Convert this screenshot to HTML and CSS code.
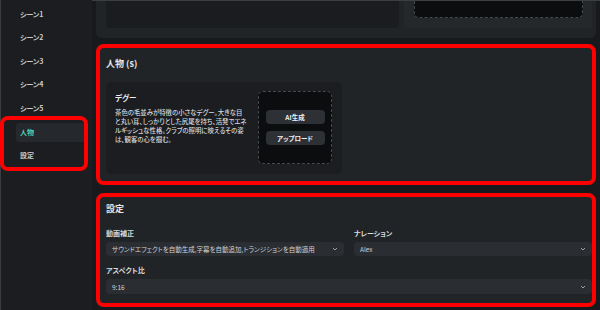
FILE: index.html
```html
<!DOCTYPE html>
<html lang="ja">
<head>
  <meta charset="UTF-8" />
  <title>Editor</title>
  <link rel="stylesheet" href="styles.css">
</head>
<body>
  <div class="app">
    <aside class="sidebar">
      <div class="nav-item">シーン1</div>
      <div class="nav-item">シーン2</div>
      <div class="nav-item">シーン3</div>
      <div class="nav-item">シーン4</div>
      <div class="nav-item">シーン5</div>
      <div class="nav-group marked">
        <div class="nav-item active">人物</div>
        <div class="nav-item">設定</div>
      </div>
    </aside>

    <main class="main">
      <section class="panel panel-prev">
        <div class="prev-card"></div>
        <div class="prev-card prev-media">
          <div class="dropzone"></div>
        </div>
      </section>

      <section class="panel panel-characters marked">
        <h2 class="panel-title">人物 (s)</h2>
        <div class="character-card">
          <div class="character-info">
            <h3>デグー</h3>
            <p>茶色の毛並みが特徴の小さなデグー。大きな目<br>と丸い耳、しっかりとした尻尾を持ち、活発でエネ<br>ルギッシュな性格。クラブの照明に映えるその姿<br>は、観客の心を掴む。</p>
          </div>
          <div class="dropzone">
            <button class="btn">AI生成</button>
            <button class="btn">アップロード</button>
          </div>
        </div>
      </section>

      <section class="panel panel-settings marked">
        <h2 class="panel-title">設定</h2>
        <div class="settings-grid">
          <div class="field">
            <label>動画補正</label>
            <div class="select">
              <span>サウンドエフェクトを自動生成,字幕を自動追加,トランジションを自動適用</span>
              <svg class="chevron" viewBox="0 0 6 4"><path d="M1 1l2 2 2-2" /></svg>
            </div>
          </div>
          <div class="field">
            <label>ナレーション</label>
            <div class="select">
              <span>Alex</span>
              <svg class="chevron" viewBox="0 0 6 4"><path d="M1 1l2 2 2-2" /></svg>
            </div>
          </div>
          <div class="field field-wide">
            <label>アスペクト比</label>
            <div class="select select-tall">
              <span>9:16</span>
              <svg class="chevron" viewBox="0 0 6 4"><path d="M1 1l2 2 2-2" /></svg>
            </div>
          </div>
        </div>
      </section>
    </main>
  </div>
</body>
</html>
```

FILE: styles.css
```css
* {
  margin: 0;
  padding: 0;
  box-sizing: border-box;
  font-family: "Noto Sans CJK JP", "Noto Sans", sans-serif;
  font-feature-settings: "palt";
}
body {
  width: 600px;
  height: 310px;
  overflow: hidden;
  background: #17191c;
  color: #d4d6d9;
}
.app {
  display: flex;
  height: 310px;
}
.sidebar {
  width: 92px;
  flex-shrink: 0;
  background: #1b1d20;
  border-left: 1px solid #3a3d41;
  padding: 4.5px 4px 0 15px;
  display: flex;
  flex-direction: column;
  gap: 4.67px;
}
.nav-item {
  height: 19px;
  line-height: 19px;
  padding-left: 4px;
  font-size: 7px;
  font-weight: 700;
  color: #c9cbcf;
  border-radius: 3px;
}
.nav-item.active {
  background: #25282c;
  color: #4fd0b2;
}
.nav-group {
  margin-left: -16px;
  padding-left: 16px;
  display: flex;
  flex-direction: column;
  gap: 4.67px;
}
.nav-group.marked::after {
  top: -7px;
  bottom: -6px;
}
.marked {
  position: relative;
}
.marked::after {
  content: "";
  position: absolute;
  top: 0;
  right: 0;
  bottom: 0;
  left: 0;
  border: 4px solid #ff0000;
  border-radius: 8px;
  pointer-events: none;
}
.main {
  flex: 1;
  padding: 0 4px;
  border-top: 1px solid #3b3e42;
  overflow: hidden;
  display: flex;
  flex-direction: column;
}
.panel {
  background: #212427;
  border-radius: 6px;
}
.panel-prev {
  margin-top: -20px;
  height: 57px;
  padding: 0 4px 10px 10px;
  display: flex;
  gap: 5px;
  flex-shrink: 0;
}
.prev-card {
  width: 293px;
  background: #1a1c1f;
  border-radius: 0 0 4px 4px;
}
.prev-media {
  flex: 1;
  background: #25282b;
  padding: 0 9px 10px 10px;
  display: flex;
}
.prev-media .dropzone {
  flex: 1;
  height: auto;
}
.panel-title {
  font-size: 9px;
  line-height: 12px;
  font-weight: 700;
  color: #e4e6e8;
}
.panel-characters {
  margin-top: 6px;
  padding: 14px 4px 11px 10px;
}
.panel-characters .panel-title {
  margin-bottom: 12px;
}
.character-card {
  width: 236px;
  height: 92px;
  background: #1b1d20;
  border-radius: 5px;
  padding: 9px 10px 10px 9px;
  display: flex;
}
.character-info {
  flex: 1;
}
.character-info h3 {
  font-size: 7.5px;
  line-height: 13px;
  font-weight: 700;
  color: #eceef0;
}
.character-info p {
  margin-top: 4px;
  font-size: 6.4px;
  line-height: 9px;
  font-weight: 500;
  white-space: nowrap;
  color: #d6d8db;
}
.dropzone {
  width: 74px;
  height: 73px;
  background: #0c0d0f;
  border: 1px dashed #45484d;
  border-radius: 5px;
  display: flex;
  flex-direction: column;
  align-items: center;
  justify-content: center;
  gap: 7px;
}
.btn {
  width: 59px;
  height: 14px;
  border: none;
  border-radius: 4px;
  background: #2d3034;
  color: #eef0f2;
  font-size: 6.5px;
  font-weight: 700;
}
.panel-settings {
  margin-top: 8px;
  padding: 10px 4px 13px 10px;
}
.panel-settings .panel-title {
  margin-bottom: 13px;
}
.settings-grid {
  display: grid;
  grid-template-columns: 1fr 1fr;
  column-gap: 10px;
  row-gap: 9px;
}
.field-wide {
  grid-column: 1 / 3;
}
.field label {
  display: block;
  font-size: 7px;
  line-height: 10px;
  font-weight: 700;
  color: #d8dadd;
  margin-bottom: 4px;
}
.select {
  height: 14px;
  background: #2a2d31;
  border-radius: 4px;
  padding: 0 6px;
  display: flex;
  align-items: center;
  justify-content: space-between;
  font-size: 6.5px;
  color: #d0d2d5;
}
.select-tall {
  height: 15px;
}
.chevron {
  width: 6px;
  height: 4px;
  fill: none;
  stroke: #a9acb0;
  stroke-width: 0.9;
}
```
